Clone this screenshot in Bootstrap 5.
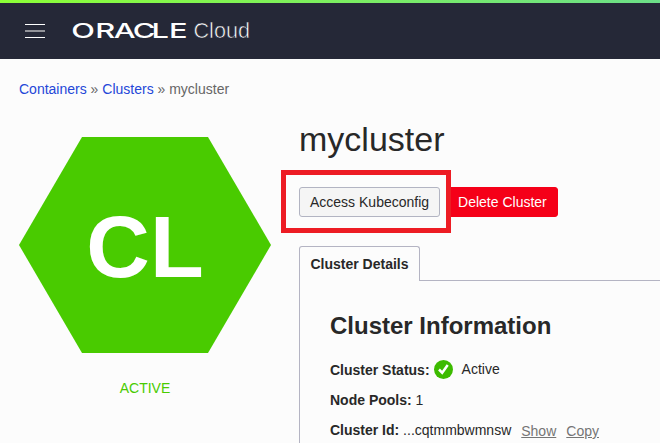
<!DOCTYPE html>
<html lang="en">
<head>
<meta charset="utf-8">
<meta name="viewport" content="width=device-width, initial-scale=1">
<title>mycluster</title>
<link href="https://cdn.jsdelivr.net/npm/bootstrap@5.3.0/dist/css/bootstrap.min.css" rel="stylesheet">
<style>
body{font-family:"Liberation Sans",Arial,sans-serif;font-size:14px;line-height:20px;color:#282828;background:#fcfcfc;height:443px;overflow:hidden}
.topbar{height:59px;background:#252837;padding:3px 0 0 25px;background-image:linear-gradient(90deg,#8cff37,#6cdf88);background-size:100% 3px;background-repeat:no-repeat}
.menu-btn{width:20px;height:20px;line-height:0}
.brand{margin-left:26px;line-height:0}
.crumbs{padding:20px 0 0 19px;color:#666;height:61px}
.crumbs a,.crumbs a:hover{color:#2447d8}
.side{width:299px;padding:17px 0 0 19px}
.hexagon{width:252px;height:216px;display:block}
.state{width:252px;margin-top:25px;color:#49cb00}
.main-col{min-width:0}
h1{font-size:34px;line-height:40px;font-weight:400;margin:-1px 0 28px}
.action{height:30px;font-size:14px;line-height:20px;padding:4px 10px;border-radius:3px}
.action-plain,.action-plain:hover{background:#f5f5f5;border-color:#b2b4c2;color:#282828}
.action-danger,.action-danger:hover{background:#f50018;border-color:#f50018;color:#fff;margin-left:7px}
.callout-box{left:-18px;top:-17px;width:170px;height:63px;border:5px solid #ed1c24;pointer-events:none}
.tabs{margin-top:29px;height:35px}
.tab-on{width:121px;border:1px solid #b4b4c3;border-bottom:0;border-radius:3px 3px 0 0;font-weight:700;line-height:34px}
.tab-rule{border-bottom:1px solid #b4b4c3}
.panel{border-left:1px solid #b4b4c3;padding:29px 0 0 30px;height:162px}
h2{font-size:24px;line-height:32px;font-weight:700;margin:0 0 18px}
.fact{height:20px;white-space:pre}
.fact+.fact{margin-top:10px}
.fact svg{margin:-1px 9px 1px 4px}
.status-text{margin-top:-2px}
.mini,.mini:hover{color:#757575;margin-left:10px;position:relative;top:1px}
</style>
</head>
<body>
<header class="topbar d-flex align-items-center">
  <a href="#" class="menu-btn" aria-label="Menu"><svg width="20" height="20" viewBox="0 0 20 20" shape-rendering="crispEdges"><path fill="#fff" d="M0 3h20v1H0zM0 16h20v1H0z"/><path fill="#929399" d="M0 9h20v2H0z"/></svg></a>
  <a href="#" class="brand"><svg width="182" height="30" viewBox="0 0 182 30" fill="#fff">
    <text transform="scale(1.52 1)" x="0.200 15.900 28.200 40.600 53 64.400" y="22" font-family="Inter" font-weight="500" font-size="20.300">ORACLE</text>
    <text x="122.500" y="22" font-family="Liberation Sans" font-size="22" textLength="56.500" lengthAdjust="spacingAndGlyphs" stroke="#252837" stroke-width=".6">Cloud</text></svg></a>
</header>
<nav class="crumbs"><a href="#" class="text-decoration-none">Containers</a> » <a href="#" class="text-decoration-none">Clusters</a> » mycluster</nav>
<div class="d-flex">
  <aside class="side flex-shrink-0">
    <svg class="hexagon" viewBox="0 0 252 216"><path fill="#49cb00" d="M63 0H189L252 108 189 216H63L0 108Z"/><text x="126" y="140" text-anchor="middle" font-family="Liberation Sans" font-weight="700" font-size="88" fill="#fff">CL</text></svg>
    <div class="state text-center">ACTIVE</div>
  </aside>
  <main class="main-col flex-grow-1">
    <h1>mycluster</h1>
    <div class="d-flex position-relative">
      <button class="btn action action-plain">Access Kubeconfig</button>
      <button class="btn action action-danger">Delete Cluster</button>
      <div class="callout-box position-absolute"></div>
    </div>
    <div class="tabs d-flex"><div class="tab-on text-center">Cluster Details</div><div class="tab-rule flex-grow-1"></div></div>
    <section class="panel">
      <h2>Cluster Information</h2>
      <div class="fact d-flex align-items-center"><strong>Cluster Status:</strong><svg width="19" height="19" viewBox="0 0 19 19"><circle cx="9.500" cy="9.500" r="9.500" fill="#3dbb00"/><path d="M5 9.500l3.200 3.200L13.700 5" fill="none" stroke="#fff" stroke-width="2.500"/></svg><span class="status-text">Active</span></div>
      <div class="fact"><strong>Node Pools:</strong> 1</div>
      <div class="fact"><strong>Cluster Id:</strong> ...cqtmmbwmnsw<a href="#" class="mini">Show</a><a href="#" class="mini">Copy</a></div>
    </section>
  </main>
</div>
<script src="https://cdn.jsdelivr.net/npm/bootstrap@5.3.0/dist/js/bootstrap.bundle.min.js"></script>
</body>
</html>
